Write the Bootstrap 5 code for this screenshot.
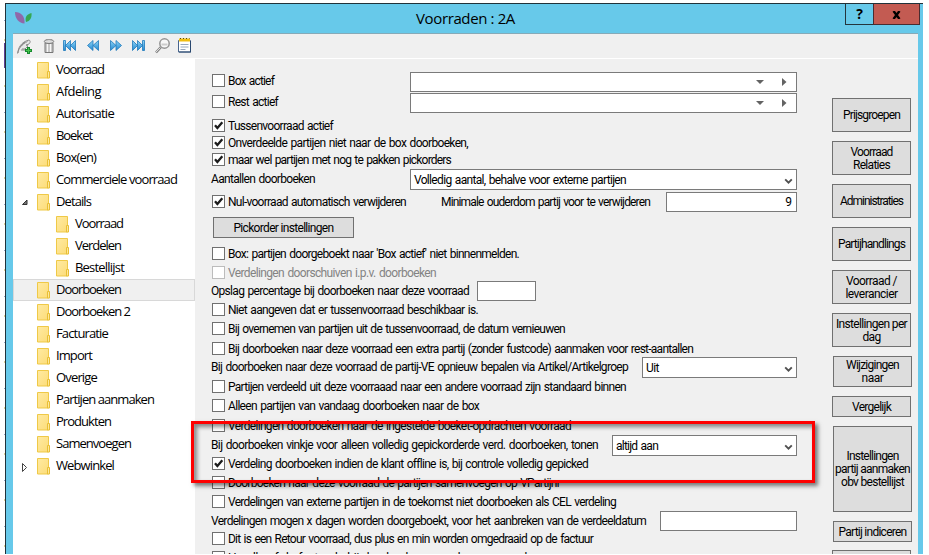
<!DOCTYPE html>
<html lang="nl">
<head>
<meta charset="utf-8">
<meta name="viewport" content="width=device-width, initial-scale=1">
<title>Voorraden : 2A</title>
<link href="https://cdn.jsdelivr.net/npm/bootstrap@5.3.0/dist/css/bootstrap.min.css" rel="stylesheet">
<style>
body{width:929px;height:555px;overflow:hidden;background:#fff;color:#000;font:12px/13px Roboto,"Liberation Sans",sans-serif}
.desk-edge{width:1px;height:551px;margin:3px 0 0 4px;background:repeating-linear-gradient(#fff 0 17px,#8fa5c4 17px 18px,#fff 18px 36px,#dfd39a 36px 38px,#fff 38px 46px)}
.desk-edge div{height:25px;margin-top:40px;background:#604098}
.win{width:918px;height:551px;margin-top:3px;background:#67c9ea;border-left:1px solid #20323a;border-top:1px solid #20323a}
.titlebar{height:29px}
.logo{margin:8px 0 0 9px}
.wintitle{font:15px/18px "Open Sans","Noto Sans",sans-serif;margin:5px 0 0 384px}
.winbtn{height:22px;margin-top:-1px;border:1px solid #24353d;font:bold 14px/19px "Open Sans",sans-serif;text-align:center}
.help{width:29px}
.closer{width:47px;margin:-1px 3px 0 -1px;background:#c35b52;border-color:#4a2c30}
.client{margin:0 5px 0 7px;background:#f0f0f0;border-top:1px solid #86aab8;height:521px}
.toolbar{height:25px;border-bottom:1px solid #fff;position:relative}
.toolbar svg{position:absolute;left:0;top:0}
.tree{width:182px;background:#fff;font:13px/18px "Open Sans","Noto Sans",sans-serif}
.node{height:22px;padding-left:23px;border:1px solid transparent}
.node .pic{width:13px;height:17px;margin:2px 6px 0 0;flex:none}
.node .tw{width:16px;margin-left:-16px;height:20px;flex:none}
.node.kid{padding-left:42px}
.node.active{background:#f0f0f0;border-color:#d8d8d8}
.form{width:586px;margin:13px 0 0 16px}
.form .line{align-items:flex-start}
.form,.side{word-spacing:1px}
.t2>*{margin-top:2px}.t3>*{margin-top:3px}
.line>.fit{padding-top:1px}
.line .field{margin-top:0}
.h15{height:15px}.h16{height:16px}.h17{height:17px}.h19{height:19px}.h20{height:20px}.h21{height:21px}.h22{height:22px}.h23{height:23px}.h25{height:25px}.h26{height:26px}.h30{height:30px}
.check{width:13px;height:13px;background:#fff;border:1px solid #707070;flex:none;margin-right:3px;margin-left:1px}
.check svg{display:block}
.fit{white-space:pre;display:inline-block;flex:none}
.off{color:#838383}.off .check{border-color:#bcbcbc}
.field{height:20px;background:#fff;border:1px solid #7a7a7a;margin-left:auto;padding:3px 3px 0;line-height:13px;flex:none}
.sel{height:21px;padding-top:4px}
.field>svg{margin-left:auto;flex:none}
.arrows{margin-right:1px}
.w387{width:387px}.w131{width:131px}.w155{width:155px}.w185{width:185px}.w137{width:137px}.w59{width:59px;margin-left:8px}
.pbtn{background:#ddd;border:1px solid #707070;display:flex;flex-direction:column;align-items:center;justify-content:center;flex:none}
.pick{width:141px;height:21px;margin-left:2px;padding:2px 0 0}
.side{margin:39px 0 0 35px;width:80px;gap:9px;height:457px;overflow:hidden}
.side .pbtn{width:79px;height:34px;padding:1px 0 0}
.side .shift{margin-left:1px}
.side .s31{height:31px}.side .s21{height:21px}.side .s86{height:86px}
.side .last{margin-top:-1px}
.marker{position:absolute;left:191px;top:421px;width:624px;height:62px;border:3px solid #fe0000;box-shadow:3px 3px 4px rgba(0,0,0,.5),inset 3px 3px 4px rgba(0,0,0,.45)}
</style>
</head>
<body>
<svg width="0" height="0" class="position-absolute">
<defs>
<linearGradient id="fg" x1="0" x2="1" y2="1"><stop offset="0" stop-color="#ffeaa2"/><stop offset="1" stop-color="#fcdc78"/></linearGradient>
<linearGradient id="bl" x2="0" y2="1"><stop offset="0" stop-color="#8fd6f8"/><stop offset="1" stop-color="#2187d0"/></linearGradient>
<symbol id="folder" viewBox="0 0 13 17"><path d="M.5.5h11v15.500H.5z" fill="url(#fg)" stroke="#efc947"/><path d="M10.500 9.500h2v6.500h-2z" fill="#ffe79a" stroke="#e8bf35"/></symbol>
<symbol id="tick" viewBox="0 0 11 11"><path d="M2 5.200 4.400 8 9.300 2.300" fill="none" stroke="#1c1c1c" stroke-width="2.300"/></symbol>
<symbol id="chev" viewBox="0 0 9 7"><path d="M1.200 1.400 4.500 4.700 7.800 1.400" fill="none" stroke="#505050" stroke-width="1.900"/></symbol>
</defs>
</svg>
<div class="d-flex">
<div class="desk-edge overflow-hidden"><div></div></div>
<div class="win overflow-hidden">
  <div class="titlebar d-flex align-items-start">
    <svg class="logo" width="17" height="12" viewBox="0 0 17 12"><path d="M0 0C6 0 10 4 9.500 11.500 4 11 0 7 0 0z" fill="#9068a9"/><path d="M16.500 1C12 2 9.500 5 11 10c4-1 6-4 5.500-9z" fill="#36a852"/></svg>
    <div class="wintitle"><span class="fit" data-w="99">Voorraden : 2A</span></div>
    <div class="winbtn help ms-auto">?</div><div class="winbtn closer"><svg width="9" height="8" viewBox="0 0 9 8"><path d="M1.500 0 7.500 8M7.500 0 1.500 8" stroke="#000" stroke-width="2.400"/></svg></div>
  </div>
  <div class="client">
    <div class="toolbar">
      <svg width="190" height="25" viewBox="13 34 190 25">
        <g fill="none" stroke="#8b8b8b"><path d="M18 53c0-5 3-11 11-13 2 1 1 3 0 4l-3 1 2 1-3 3-3 0" fill="#e8e8e8"/><path d="M17.500 53.500c1-5 4-9 10-12M20 47l5-5M21 50h5"/></g>
        <path d="M28.500 47v7M25 50.500h7" stroke="#168b2e" stroke-width="3"/><path d="M28.500 48v5M26 50.500h5" stroke="#48c44e"/>
        <path d="M45 43h8v9.500h-8z" fill="#c8c8c8" stroke="#777"/><path d="M47.500 44v8M50.500 44v8" stroke="#f6f6f6"/><ellipse cx="49" cy="41.500" rx="4.700" ry="2" fill="#ddd" stroke="#777"/><path d="M46 39.500h6" stroke="#999"/>
        <g fill="url(#bl)" stroke="#1e78bb" stroke-width=".8">
          <path d="M63.500 40.500h2v10h-2zM70.500 40.500v10L65.500 45.500zM75.500 40.500v10L70.500 45.500z"/>
          <path d="M93 40.500v10L87.500 45.500zM98.500 40.500v10L93 45.500z"/>
          <path d="M110.500 40.500v10l5.500-5zM116 40.500v10l5.500-5z"/>
          <path d="M142.500 40.500h2v10h-2zM132.500 40.500v10l5-5zM137.500 40.500v10l5-5z"/>
        </g>
        <path d="M156 52.500 161 47" stroke="#858585" stroke-width="2.600"/><path d="M156 52 160.500 47.500" stroke="#ddd"/><circle cx="164.500" cy="43.500" r="4.700" fill="#f7f7f7" stroke="#949494" stroke-width="1.500"/><path d="M161.500 44.500h6" stroke="#ccc" stroke-width="2"/>
        <path d="M178.500 40.500h12v11.500h-12z" fill="#fff" stroke="#49658c"/><path d="M179 52h12M190.500 41v11" stroke="#29486f"/><path d="M179 40h11" stroke="#f0bd10" stroke-width="3"/><path d="M180 38.500h9.500" stroke="#5a4a14" stroke-dasharray="1 2"/><path d="M180.500 44.500h8M180.500 47h8M180.500 49.500h5" stroke="#98a8bd"/>
      </svg>
    </div>
    <div class="d-flex h-100">
      <div class="tree">
        <div class="node d-flex"><svg class="pic"><use href="#folder"/></svg><span class="fit" data-w="48">Voorraad</span></div>
        <div class="node d-flex"><svg class="pic"><use href="#folder"/></svg><span class="fit" data-w="45">Afdeling</span></div>
        <div class="node d-flex"><svg class="pic"><use href="#folder"/></svg><span class="fit" data-w="58">Autorisatie</span></div>
        <div class="node d-flex"><svg class="pic"><use href="#folder"/></svg><span class="fit" data-w="36">Boeket</span></div>
        <div class="node d-flex"><svg class="pic"><use href="#folder"/></svg><span class="fit" data-w="40">Box(en)</span></div>
        <div class="node d-flex"><svg class="pic"><use href="#folder"/></svg><span class="fit" data-w="121">Commerciele voorraad</span></div>
        <div class="node d-flex"><svg class="tw" viewBox="0 0 16 20"><path d="M1.500 12.500h4.500V8z" fill="#777" stroke="#333"/></svg><svg class="pic"><use href="#folder"/></svg><span class="fit" data-w="35">Details</span></div>
        <div class="node kid d-flex"><svg class="pic"><use href="#folder"/></svg><span class="fit" data-w="48">Voorraad</span></div>
        <div class="node kid d-flex"><svg class="pic"><use href="#folder"/></svg><span class="fit" data-w="46">Verdelen</span></div>
        <div class="node kid d-flex"><svg class="pic"><use href="#folder"/></svg><span class="fit" data-w="49">Bestellijst</span></div>
        <div class="node active d-flex"><svg class="pic"><use href="#folder"/></svg><span class="fit" data-w="65">Doorboeken</span></div>
        <div class="node d-flex"><svg class="pic"><use href="#folder"/></svg><span class="fit" data-w="74">Doorboeken 2</span></div>
        <div class="node d-flex"><svg class="pic"><use href="#folder"/></svg><span class="fit" data-w="52">Facturatie</span></div>
        <div class="node d-flex"><svg class="pic"><use href="#folder"/></svg><span class="fit" data-w="36">Import</span></div>
        <div class="node d-flex"><svg class="pic"><use href="#folder"/></svg><span class="fit" data-w="41">Overige</span></div>
        <div class="node d-flex"><svg class="pic"><use href="#folder"/></svg><span class="fit" data-w="98">Partijen aanmaken</span></div>
        <div class="node d-flex"><svg class="pic"><use href="#folder"/></svg><span class="fit" data-w="55">Produkten</span></div>
        <div class="node d-flex"><svg class="pic"><use href="#folder"/></svg><span class="fit" data-w="75">Samenvoegen</span></div>
        <div class="node d-flex"><svg class="tw" viewBox="0 0 16 20"><path d="M1.500 7.500v8l4-4z" fill="#fff" stroke="#444"/></svg><svg class="pic"><use href="#folder"/></svg><span class="fit" data-w="58">Webwinkel</span></div>
      </div>

      <div class="form">
        <div class="line d-flex h21 t2"><span class="check"></span><span class="fit" data-w="46">Box actief</span><div class="field w387 d-flex"><svg class="arrows" width="36" height="13" viewBox="0 0 36 13"><path d="M0 4h8L4 8zM26 2v8l4.500-4z" fill="#636363"/></svg></div></div>
        <div class="line d-flex h26 t2"><span class="check"></span><span class="fit" data-w="50">Rest actief</span><div class="field w387 d-flex"><svg class="arrows" width="36" height="13" viewBox="0 0 36 13"><path d="M0 4h8L4 8zM26 2v8l4.500-4z" fill="#636363"/></svg></div></div>
        <div class="line d-flex h17"><span class="check"><svg width="11" height="11"><use href="#tick"/></svg></span><span class="fit" data-w="105">Tussenvoorraad actief</span></div>
        <div class="line d-flex h17"><span class="check"><svg width="11" height="11"><use href="#tick"/></svg></span><span class="fit" data-w="240">Onverdeelde partijen niet naar de box doorboeken,</span></div>
        <div class="line d-flex h16"><span class="check"><svg width="11" height="11"><use href="#tick"/></svg></span><span class="fit" data-w="223">maar wel partijen met nog te pakken pickorders</span></div>
        <div class="line d-flex h23 t3"><span class="fit" data-w="104">Aantallen doorboeken</span><div class="field sel w387 d-flex"><span class="fit" data-w="212">Volledig aantal, behalve voor externe partijen</span><svg class="mt-1" width="9" height="7"><use href="#chev"/></svg></div></div>
        <div class="line d-flex h25 t3"><span class="check"><svg width="11" height="11"><use href="#tick"/></svg></span><span class="fit" data-w="178">Nul-voorraad automatisch verwijderen</span><span class="fit ms-auto" data-w="209">Minimale ouderdom partij voor te verwijderen</span><div class="field w131 text-end ms-3 pe-0">9&nbsp;</div></div>
        <div class="line d-flex h30"><button type="button" class="pbtn pick"><span class="fit" data-w="100">Pickorder instellingen</span></button></div>
        <div class="line d-flex h19"><span class="check"></span><span class="fit" data-w="291">Box: partijen doorgeboekt naar 'Box actief' niet binnenmelden.</span></div>
        <div class="line d-flex h15 off"><span class="check"></span><span class="fit" data-w="208">Verdelingen doorschuiven i.p.v. doorboeken</span></div>
        <div class="line d-flex h22 t3"><span class="fit" data-w="258">Opslag percentage bij doorboeken naar deze voorraad</span><div class="field w59"></div></div>
        <div class="line d-flex h19"><span class="check"></span><span class="fit" data-w="250">Niet aangeven dat er tussenvoorraad beschikbaar is.</span></div>
        <div class="line d-flex h20"><span class="check"></span><span class="fit" data-w="337">Bij overnemen van partijen uit de tussenvoorraad, de datum vernieuwen</span></div>
        <div class="line d-flex h15"><span class="check"></span><span class="fit" data-w="465">Bij doorboeken naar deze voorraad een extra partij (zonder fustcode) aanmaken voor rest-aantallen</span></div>
        <div class="line d-flex h23 t3"><span class="fit" data-w="417">Bij doorboeken naar deze voorraad de partij-VE opnieuw bepalen via Artikel/Artikelgroep</span><div class="field sel w155 d-flex"><span class="fit" data-w="13">Uit</span><svg class="mt-1" width="9" height="7"><use href="#chev"/></svg></div></div>
        <div class="line d-flex h19"><span class="check"></span><span class="fit" data-w="398">Partijen verdeeld uit deze voorraaad naar een andere voorraad zijn standaard binnen</span></div>
        <div class="line d-flex h20"><span class="check"></span><span class="fit" data-w="251">Alleen partijen van vandaag doorboeken naar de box</span></div>
        <div class="line d-flex h16"><span class="check"></span><span class="fit" data-w="343">Verdelingen doorboeken naar de ingestelde boeket-opdrachten voorraad</span></div>
        <div class="line d-flex h22 t3"><span class="fit" data-w="387">Bij doorboeken vinkje voor alleen volledig gepickorderde verd. doorboeken, tonen</span><div class="field sel w185 d-flex"><span class="fit" data-w="42">altijd aan</span><svg class="mt-1" width="9" height="7"><use href="#chev"/></svg></div></div>
        <div class="line d-flex h19"><span class="check"><svg width="11" height="11"><use href="#tick"/></svg></span><span class="fit" data-w="359">Verdeling doorboeken indien de klant offline is, bij controle volledig gepicked</span></div>
        <div class="line d-flex h19"><span class="check"></span><span class="fit" data-w="332">Doorboeken naar deze voorraad de partijen samenvoegen op VPartijnr</span></div>
        <div class="line d-flex h16"><span class="check"></span><span class="fit" data-w="388">Verdelingen van externe partijen in de toekomst niet doorboeken als CEL verdeling</span></div>
        <div class="line d-flex h21 t3"><span class="fit" data-w="435">Verdelingen mogen x dagen worden doorgeboekt, voor het aanbreken van de verdeeldatum</span><div class="field w137"></div></div>
        <div class="line d-flex h19"><span class="check"></span><span class="fit" data-w="365">Dit is een Retour voorraad, dus plus en min worden omgedraaid op de factuur</span></div>
        <div class="line d-flex h19"><span class="check"></span><span class="fit" data-w="299">Handhaaf de fustcode bij doorboeken naar deze voorraad</span></div>
      </div>

      <div class="side d-flex flex-column">
        <button type="button" class="pbtn"><span class="fit" data-w="57">Prijsgroepen</span></button>
        <button type="button" class="pbtn"><span class="fit" data-w="42">Voorraad</span><span class="fit" data-w="37">Relaties</span></button>
        <button type="button" class="pbtn"><span class="fit" data-w="63">Administraties</span></button>
        <button type="button" class="pbtn"><span class="fit" data-w="67">Partijhandlings</span></button>
        <button type="button" class="pbtn"><span class="fit" data-w="51">Voorraad /</span><span class="fit" data-w="52">leverancier</span></button>
        <button type="button" class="pbtn"><span class="fit" data-w="71">Instellingen per</span><span class="fit" data-w="18">dag</span></button>
        <button type="button" class="pbtn shift s31"><span class="fit" data-w="53">Wijzigingen</span><span class="fit" data-w="22">naar</span></button>
        <button type="button" class="pbtn s21"><span class="fit" data-w="39">Vergelijk</span></button>
        <button type="button" class="pbtn shift s86"><span class="fit" data-w="52">Instellingen</span><span class="fit" data-w="75">partij aanmaken</span><span class="fit" data-w="63">obv bestellijst</span></button>
        <button type="button" class="pbtn shift s21"><span class="fit" data-w="68">Partij indiceren</span></button>
        <button type="button" class="pbtn last s21" aria-label="Meer"></button>
      </div>
    </div>
  </div>
</div>
</div>
<div class="marker"></div>
<script src="https://cdn.jsdelivr.net/npm/bootstrap@5.3.0/dist/js/bootstrap.bundle.min.js"></script>
<script>
document.querySelectorAll('.fit').forEach(function (el) {
  var natural = el.getBoundingClientRect().width;
  el.style.letterSpacing = ((+el.dataset.w - natural) / el.textContent.length).toFixed(3) + 'px';
});
</script>
</body>
</html>
